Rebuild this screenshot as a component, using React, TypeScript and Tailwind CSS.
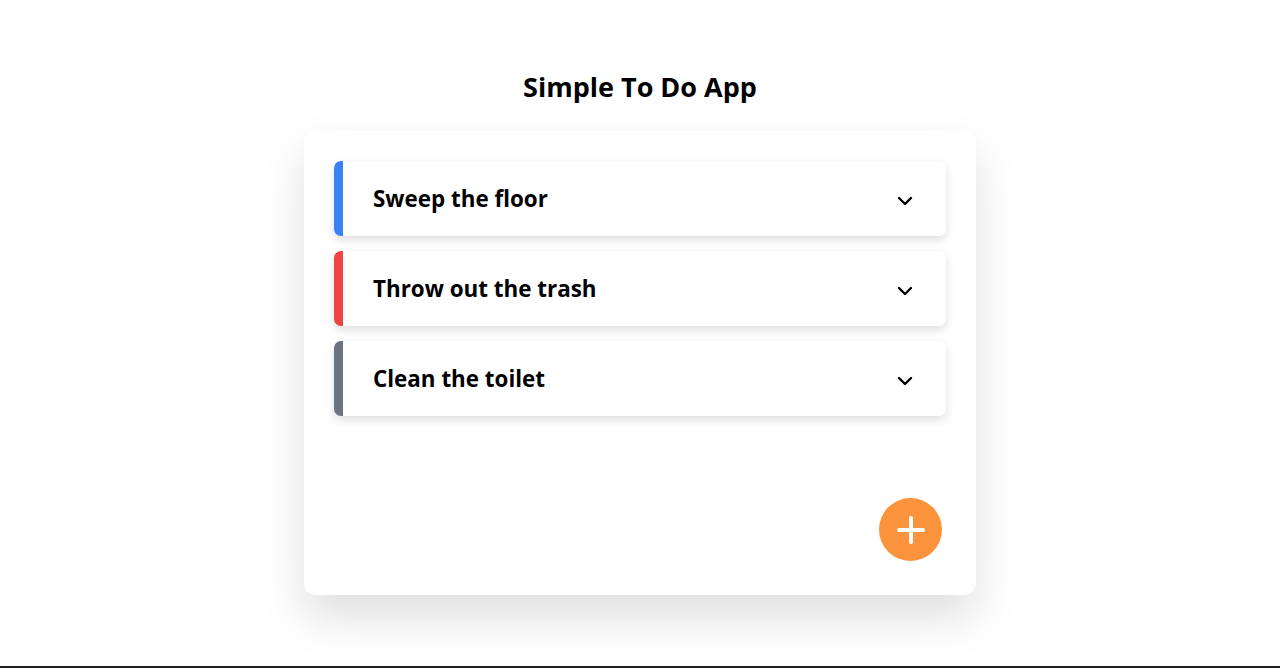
import { ChevronDown } from 'lucide-react'

interface Task {
    title: string
    color: string
}

const tasks: Task[] = [
    { title: 'Sweep the floor', color: 'bg-[#3b82f6]' },
    { title: 'Throw out the trash', color: 'bg-[#ef4444]' },
    { title: 'Clean the toilet', color: 'bg-[#6b7280]' },
]

function TaskCard({ title, color }: Task) {
    return (
        <div className="flex h-[75px] overflow-hidden rounded-[7px] bg-white shadow-[0_4px_10px_rgba(0,0,0,0.13)]">
            <div className={`w-[9px] shrink-0 ${color}`} />
            <div className="flex flex-1 items-center justify-between pl-[30px] pr-[29px]">
                <span className="text-[22.4px] font-bold text-black">{title}</span>
                <ChevronDown size={24} strokeWidth={2.4} className="mt-1 text-black" />
            </div>
        </div>
    )
}

export default function App() {
    return (
        <div
            className="flex h-[668px] flex-col items-center border-b-2 border-[#1e1e1e] bg-white"
            style={{ fontFamily: '"Open Sans", sans-serif' }}
        >
            <h1 className="mt-[69px] h-9 text-[27px] font-bold leading-9 text-black">Simple To Do App</h1>
            <div className="mt-[26px] flex h-[464px] w-[672px] flex-col rounded-xl bg-white p-[30px] shadow-[0_22px_45px_rgba(0,0,0,0.13)]">
                <div className="flex flex-col gap-[15px]">
                    {tasks.map(t => (
                        <TaskCard key={t.title} {...t} />
                    ))}
                </div>
                <div className="mt-auto flex justify-end pb-1 pr-1">
                    <button className="flex h-[63px] w-[63px] items-center justify-center rounded-full bg-[#fb923c]">
                        <svg width="28" height="28" viewBox="0 0 28 28">
                            <path d="M14 2v24M2 14h24" stroke="white" strokeWidth="4" strokeLinecap="round" />
                        </svg>
                    </button>
                </div>
            </div>
        </div>
    )
}
